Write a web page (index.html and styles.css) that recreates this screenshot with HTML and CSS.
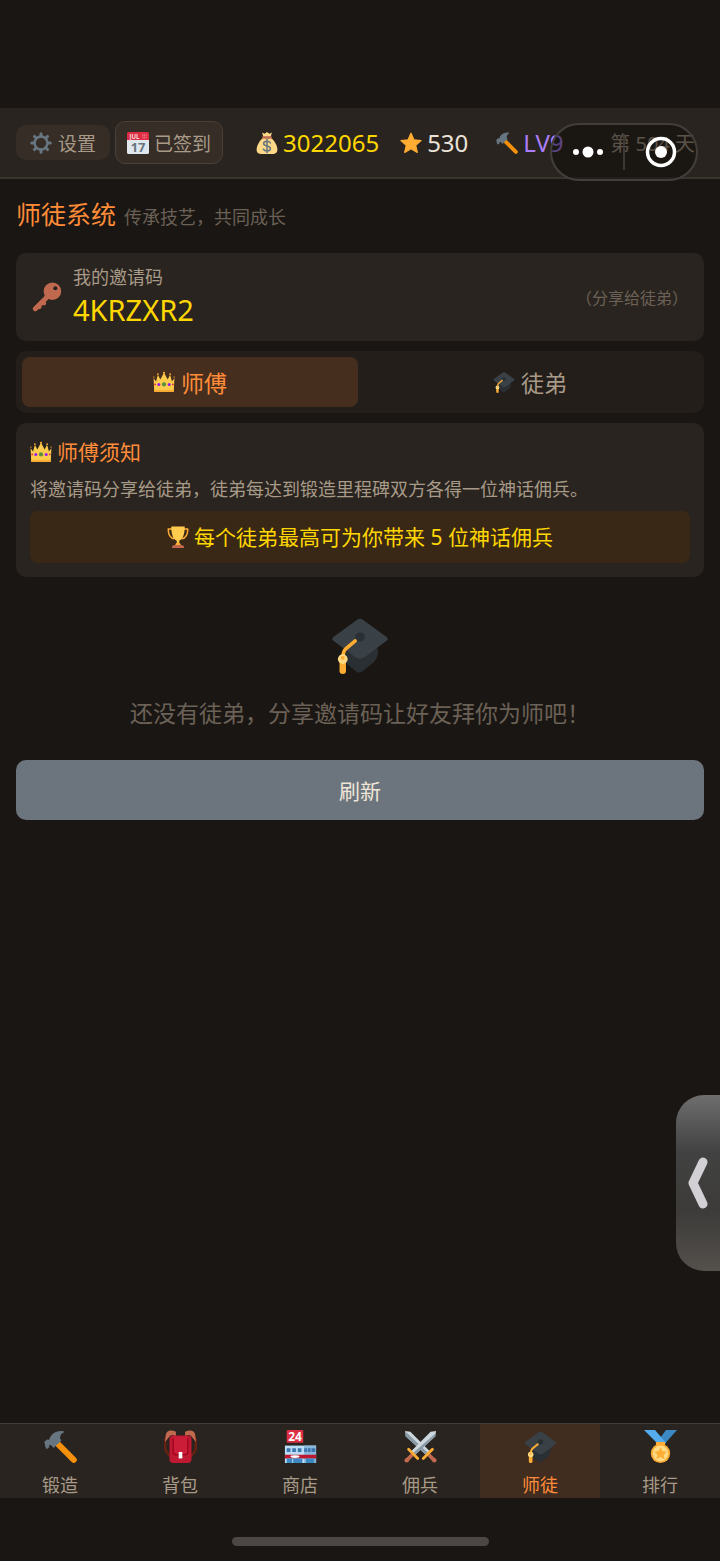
FILE: index.html
```html
<!DOCTYPE html>
<html lang="zh-CN">
<head>
    <meta charset="UTF-8">
    <meta name="viewport" content="width=device-width, initial-scale=1.0">
    <title>师徒系统</title>
    <link rel="stylesheet" href="styles.css">
</head>
<body>
    <svg class="sprite" aria-hidden="true">
        <symbol id="icon-gear" viewBox="0 0 36 36">
            <g stroke="#66757f" stroke-width="5" stroke-linecap="round">
                <path d="M18 2.800v4M18 29.200v4M2.800 18h4M29.200 18h4M7.300 7.300l3 3M25.700 25.700l3 3M28.700 7.300l-3 3M10.300 25.700l-3 3"/>
            </g>
            <circle cx="18" cy="18" r="10.500" fill="none" stroke="#66757f" stroke-width="4"/>
        </symbol>
        <symbol id="icon-calendar" viewBox="0 0 36 36">
            <rect x="0" y="2" width="36" height="34" rx="3" fill="#e1e8ed"/>
            <path d="M0 13V3q0-3 3-3h30q3 0 3 3v10z" fill="#dd2e44"/>
            <text x="4" y="11" font-size="10" font-weight="700" fill="#f5d5d9">JUL</text>
            <path d="M25 5h7M25 9h7" stroke="#f4707f" stroke-width="3" stroke-dasharray="2 1"/>
            <text x="18" y="32" font-size="21" font-weight="700" text-anchor="middle" fill="#66757f">17</text>
        </symbol>
        <symbol id="icon-money" viewBox="0 0 36 36">
            <path d="M12 9h12c6 5 11 13 11 20 0 5-4 7-8 7H9c-5 0-8-2-8-7C1 22 6 14 12 9z" fill="#fdd888"/>
            <path d="M10 1l4 2 4-3 4 3 4-2-2 7H12z" fill="#fdd888"/>
            <rect x="10" y="7" width="16" height="4" rx="2" fill="#bf6952"/>
            <path d="M23.500 18c-1-2-3-3-5.500-3-3 0-5.500 1.500-5.500 4s2.500 3.500 5.500 4 5.500 1.500 5.500 4-2.500 4-5.500 4-5-1-6-3M18 12v22" fill="none" stroke="#67757f" stroke-width="2.500" stroke-linecap="round"/>
        </symbol>
        <symbol id="icon-star" viewBox="0 0 36 36">
            <path d="M18 2l4.800 10.800 11.700 1.200-8.800 7.800 2.600 11.600L18 27.400 7.700 33.400l2.600-11.600L1.500 14l11.700-1.200z" fill="#ffac33" stroke="#ffac33" stroke-width="2" stroke-linejoin="round"/>
        </symbol>
        <symbol id="icon-hammer" viewBox="0 0 36 36">
            <path d="M14 14l18.500 18.500" stroke="#f4900c" stroke-width="6.500" stroke-linecap="round"/>
            <path d="M.7 14.500c-.6-.8-.4-1.600.3-2.200l2-1.600c.8-.6 1.600-.4 2.400.2C7 5 12 1.200 18 1c2.500-.1 3.800.5 4.600 1.200-3.600.8-5.300 4-5.100 7l1.500 2.300-8.500 8-2.500-2.700c-1-.8-2-.6-2.600.1.700 1 .6 1.700-.1 2.300l-1.300 1c-.7.600-1.500.4-2.100-.4z" fill="#66757f"/>
        </symbol>
        <symbol id="icon-key" viewBox="0 0 36 36">
            <circle cx="24.500" cy="11" r="10.500" fill="#c1694f"/>
            <path d="M19 17L4 32" stroke="#c1694f" stroke-width="6" stroke-linecap="round"/>
            <path d="M8 28l1 2M13 24l1.500 1.500" stroke="#c1694f" stroke-width="5" stroke-linecap="round"/>
            <circle cx="28" cy="7.500" r="2.500" fill="#292421"/>
        </symbol>
        <symbol id="icon-crown" viewBox="0 0 36 36">
            <path d="M2 34L1 12l4 5 3-11 4 8 6-11 6 11 4-8 3 11 4-5-1 22z" fill="#ffcc4d"/>
            <g fill="#ffac33">
                <circle cx="1.500" cy="10" r="1.200"/><circle cx="8" cy="5" r="1.500"/><circle cx="18" cy="3" r="1.800"/><circle cx="28" cy="5" r="1.500"/><circle cx="34.500" cy="10" r="1.200"/>
                <path d="M2 31h32v3H2z"/>
            </g>
            <circle cx="18" cy="22" r="3.500" fill="#5c913b"/>
            <circle cx="9.500" cy="22" r="2.500" fill="#981ceb"/>
            <circle cx="26.500" cy="22" r="2.500" fill="#981ceb"/>
            <circle cx="3.500" cy="22" r="1.500" fill="#dd2e44"/>
            <circle cx="32.500" cy="22" r="1.500" fill="#dd2e44"/>
        </symbol>
        <symbol id="icon-cap" viewBox="0 0 36 36">
            <path d="M8 17l16-1 5 4c1 4-1 8-4 10l-5 4c-2 1.500-3 1.500-5 0L8 28z" fill="#292f33"/>
            <path d="M1.500 13L16 2.500q2-1.500 4 0L34.500 13q1.500 1.200 0 2.400L21 25.500q-3 2-6 0L1.500 15.400Q0 14.200 1.500 13z" fill="#394147"/>
            <ellipse cx="18" cy="13" rx="3" ry="2.800" fill="#292f33"/>
            <path d="M15 15.500l-6 5q-1.500 1.500-1.500 5" fill="none" stroke="#ffac33" stroke-width="2.200" stroke-linecap="round"/>
            <path d="M7.300 28v6" stroke="#ffac33" stroke-width="4" stroke-linecap="round"/>
            <circle cx="7.300" cy="26.800" r="3" fill="#ffd983"/>
            <circle cx="7.300" cy="26" r="1.200" fill="#ffac33"/>
        </symbol>
        <symbol id="icon-trophy" viewBox="0 0 36 36">
            <path d="M9 5H2c0 8 3 15 10 16M27 5h7c0 8-3 15-10 16" fill="none" stroke="#ffac33" stroke-width="2.500" stroke-linejoin="round"/>
            <path d="M7 1h22c0 13-3 21-9 23v6h-4v-6C10 22 7 14 7 1z" fill="#ffcc4d"/>
            <path d="M15 28h6l2 4H13z" fill="#ffac33"/>
            <path d="M8 36q0-5 5-5h10q5 0 5 5z" fill="#c1694f"/>
        </symbol>
        <symbol id="icon-backpack" viewBox="0 0 36 36">
            <path d="M9 2C3 4 1 9 1 16s2 10 7 13M27 2c6 2 8 7 8 14s-2 10-7 13" fill="none" stroke="#662113" stroke-width="3"/>
            <path d="M13 2C8-.5 3 0 2 5l-1 8 6-7q4-2 6 2zM23 2c5-2.500 10-2 11 3l1 8-6-7q-4-2-6 2z" fill="#c1694f"/>
            <path d="M10 6h16q4 0 4 4v22q0 4-4 4H10q-4 0-4-4V10q0-4 4-4z" fill="#be1931"/>
            <path d="M10 7h16v18q0 3-3 3H13q-3 0-3-3z" fill="#cb1c38"/>
            <path d="M10 9v15q0 3 3 3h10q3 0 3-3V9" fill="none" stroke="#a0041e" stroke-width="1.500"/>
            <rect x="16" y="24" width="4" height="7" fill="#fff"/>
        </symbol>
        <symbol id="icon-store" viewBox="0 0 36 36">
            <rect x="1" y="17" width="34" height="19" fill="#bbddf5"/>
            <path d="M22 17h13v19H22z" fill="#88b8dd"/>
            <path d="M3 20h4v4H3zM9 20h4v4H9zM15 20h4v4h-4zM22 20h3v4h-3zM26 20h3v4h-3zM30 20h4v4h-4z" fill="#3b75ad"/>
            <path d="M1 27h34v4H1z" fill="#be1931"/>
            <ellipse cx="12" cy="29" rx="5" ry="1.500" fill="#fff"/>
            <path d="M3 31h6v5H3zM10 31h10v5H10zM24 31h9v5h-9z" fill="#3b88c3"/>
            <rect x="3" y="0" width="18" height="14" rx="1" fill="#dd2e44"/>
            <text x="12" y="11.500" font-size="13" font-weight="700" text-anchor="middle" fill="#fff">24</text>
        </symbol>
        <symbol id="icon-swords" viewBox="0 0 36 36">
            <path d="M1 1l6 1 22 22-4 4L2 7z" fill="#ccd6dd"/>
            <path d="M1 1l26 25-2 2L2 7z" fill="#8899a6"/>
            <path d="M27 27l5 5" stroke="#c1694f" stroke-width="4"/>
            <path d="M21 31l10-10" stroke="#ffac33" stroke-width="3" stroke-linecap="round"/>
            <circle cx="33" cy="33" r="2.500" fill="#c1694f"/>
            <path d="M35 1l-6 1L7 24l4 4L34 7z" fill="#ccd6dd"/>
            <path d="M34 7L11 28l-2-2L34 4z" fill="#8899a6"/>
            <path d="M9 27l-5 5" stroke="#c1694f" stroke-width="4"/>
            <path d="M15 31L5 21" stroke="#ffac33" stroke-width="3" stroke-linecap="round"/>
            <circle cx="3" cy="33" r="2.500" fill="#c1694f"/>
        </symbol>
        <symbol id="icon-medal" viewBox="0 0 36 36">
            <path d="M36 0H24l-9 12 6 5z" fill="#3b88c3"/>
            <path d="M0 0h12l12 14-5 5z" fill="#55acee"/>
            <rect x="13" y="13" width="10" height="5" rx="1" fill="#ffac33"/>
            <circle cx="18" cy="25.500" r="10.500" fill="#ffac33"/>
            <circle cx="18" cy="25.500" r="8.500" fill="#ffd983"/>
            <path d="M18 18.500l2 4.700 5 .5-3.800 3.300 1.200 5-4.400-2.700-4.400 2.700 1.200-5-3.800-3.300 5-.5z" fill="#ffac33"/>
        </symbol>
    </svg>

    <div class="page">
        <header class="top-bar">
            <button class="settings-button"><svg class="icon"><use href="#icon-gear"/></svg>设置</button>
            <button class="checkin-button"><svg class="icon"><use href="#icon-calendar"/></svg>已签到</button>
            <div class="resource coins"><svg class="icon"><use href="#icon-money"/></svg>3022065</div>
            <div class="resource stars"><svg class="icon"><use href="#icon-star"/></svg>530</div>
            <div class="resource level"><svg class="icon"><use href="#icon-hammer"/></svg>LV9</div>
            <div class="day">第 504 天</div>
            <div class="capsule">
                <button class="capsule-button" aria-label="更多">
                    <svg width="32" height="12" viewBox="0 0 32 12" fill="#fff"><circle cx="4" cy="6" r="3"/><circle cx="16" cy="6" r="5.500"/><circle cx="28" cy="6" r="3"/></svg>
                </button>
                <span class="capsule-line"></span>
                <button class="capsule-button" aria-label="关闭">
                    <svg width="32" height="32" viewBox="0 0 32 32"><circle cx="16" cy="16" r="13.500" fill="none" stroke="#fff" stroke-width="3.500"/><circle cx="16" cy="16" r="6" fill="#fff"/></svg>
                </button>
            </div>
        </header>

        <main class="content">
            <div class="title-row">
                <h1>师徒系统</h1>
                <span class="subtitle">传承技艺，共同成长</span>
            </div>

            <section class="card invite-card">
                <svg class="key-icon"><use href="#icon-key"/></svg>
                <div class="invite-info">
                    <div class="invite-label">我的邀请码</div>
                    <div class="invite-code">4KRZXR2</div>
                </div>
                <span class="invite-hint">（分享给徒弟）</span>
            </section>

            <div class="tabs" role="tablist">
                <button class="tab active" role="tab" aria-selected="true"><svg class="icon"><use href="#icon-crown"/></svg>师傅</button>
                <button class="tab" role="tab" aria-selected="false"><svg class="icon"><use href="#icon-cap"/></svg>徒弟</button>
            </div>

            <section class="card notice-card">
                <h2><svg class="icon"><use href="#icon-crown"/></svg>师傅须知</h2>
                <p>将邀请码分享给徒弟，徒弟每达到锻造里程碑双方各得一位神话佣兵。</p>
                <div class="highlight"><svg class="icon"><use href="#icon-trophy"/></svg>每个徒弟最高可为你带来 5 位神话佣兵</div>
            </section>

            <div class="empty">
                <svg class="empty-icon"><use href="#icon-cap"/></svg>
                <p>还没有徒弟，分享邀请码让好友拜你为师吧！</p>
            </div>

            <button class="refresh-button">刷新</button>
        </main>

        <button class="drawer-handle" aria-label="展开">
            <svg width="20" height="52" viewBox="0 0 20 52"><path d="M15 5L5 26l10 21" fill="none" stroke="#d2d0d4" stroke-width="9" stroke-linecap="round" stroke-linejoin="round"/></svg>
        </button>

        <nav class="bottom-nav">
            <button class="nav-item"><svg class="nav-icon"><use href="#icon-hammer"/></svg>锻造</button>
            <button class="nav-item"><svg class="nav-icon"><use href="#icon-backpack"/></svg>背包</button>
            <button class="nav-item"><svg class="nav-icon"><use href="#icon-store"/></svg>商店</button>
            <button class="nav-item"><svg class="nav-icon"><use href="#icon-swords"/></svg>佣兵</button>
            <button class="nav-item active"><svg class="nav-icon"><use href="#icon-cap"/></svg>师徒</button>
            <button class="nav-item"><svg class="nav-icon"><use href="#icon-medal"/></svg>排行</button>
        </nav>
        <div class="home-area"><div class="home-bar"></div></div>
    </div>
</body>
</html>
```
FILE: styles.css
```css
* {
    box-sizing: border-box;
}
body {
    margin: 0;
    background-color: #1a1613;
    color: #a89a88;
    font-family: "Noto Sans", "Noto Sans CJK SC", sans-serif;
    font-size: 18px;
}
h1, h2, p {
    margin: 0;
    font-weight: 400;
}
button {
    margin: 0;
    padding: 0;
    border: none;
    background: none;
    color: inherit;
    font-family: inherit;
    cursor: pointer;
}
.sprite {
    display: none;
}
.icon {
    width: 22px;
    height: 22px;
    flex-shrink: 0;
}
.page {
    position: relative;
    display: flex;
    flex-direction: column;
    min-height: 100vh;
    padding-top: 108px;
}

/* top bar */
.top-bar {
    position: relative;
    display: flex;
    align-items: center;
    height: 71px;
    padding: 0 16px;
    background-color: #29241f;
    border-bottom: 2px solid #3b3530;
    white-space: nowrap;
}
.settings-button, .checkin-button {
    display: flex;
    align-items: center;
    justify-content: center;
    background-color: #352d26;
    font-size: 19px;
}
.settings-button {
    height: 35px;
    padding: 0 14px;
    gap: 6px;
    border-radius: 10px;
}
.checkin-button {
    height: 43px;
    margin-left: 5px;
    padding: 0 11px;
    gap: 5px;
    border: 1px solid #4a4037;
    border-radius: 10px;
}
.resource {
    display: flex;
    align-items: center;
    gap: 5px;
    font-size: 24px;
}
.coins {
    margin-left: 33px;
    color: #ffd700;
}
.stars {
    margin-left: 21px;
    color: #ebe3d8;
}
.level {
    margin-left: 28px;
    color: #a97dfa;
}
.day {
    margin-left: auto;
    padding-right: 9px;
    font-size: 20px;
}
.capsule {
    position: absolute;
    top: 15px;
    right: 22px;
    display: flex;
    align-items: center;
    width: 148px;
    height: 58px;
    background-color: rgba(11, 9, 8, 0.5);
    border: 2px solid #433e3b;
    border-radius: 29px;
}
.capsule-button {
    display: flex;
    flex: 1;
    justify-content: center;
}
.capsule-line {
    width: 2px;
    height: 36px;
    background-color: #3d3833;
}

/* content */
.content {
    display: flex;
    flex-direction: column;
    padding: 20px 16px 0;
}
.title-row {
    display: flex;
    align-items: baseline;
    gap: 8px;
    line-height: 30px;
    margin-bottom: 21px;
}
.title-row h1 {
    font-size: 25px;
    color: #ff8c38;
}
.subtitle {
    color: #6b6156;
}
.card {
    background-color: #29241f;
    border-radius: 10px;
}
.invite-card {
    display: flex;
    align-items: center;
    gap: 11px;
    padding: 12px 16px;
}
.key-icon {
    width: 30px;
    height: 30px;
}
.invite-info {
    flex: 1;
}
.invite-label {
    line-height: 24px;
    margin-bottom: 2px;
}
.invite-code {
    font-size: 29px;
    line-height: 38px;
    color: #ffd700;
}
.invite-hint {
    font-size: 16px;
    color: #6b6156;
}
.tabs {
    display: flex;
    gap: 4px;
    margin: 10px 0;
    padding: 6px;
    background-color: #231e1a;
    border-radius: 10px;
}
.tab {
    display: flex;
    flex: 1;
    align-items: center;
    justify-content: center;
    gap: 6px;
    height: 50px;
    border-radius: 8px;
    font-size: 23px;
}
.tab.active {
    background-color: #462e1e;
    color: #ff8c38;
}
.notice-card {
    padding: 14px;
}
.notice-card h2 {
    display: flex;
    align-items: center;
    gap: 5px;
    font-size: 21px;
    line-height: 30px;
    color: #ff8c38;
}
.notice-card p {
    margin: 8px 0;
    line-height: 28px;
}
.highlight {
    display: flex;
    align-items: center;
    justify-content: center;
    gap: 5px;
    height: 52px;
    background-color: #3a2816;
    border-radius: 8px;
    font-size: 21px;
    line-height: 28px;
    color: #ffd700;
}
.empty {
    display: flex;
    flex-direction: column;
    align-items: center;
    gap: 22px;
    padding: 38px 0 31px;
    font-size: 23px;
    line-height: 32px;
    color: #6b6156;
}
.empty-icon {
    width: 58px;
    height: 60px;
}
.refresh-button {
    height: 60px;
    border-radius: 10px;
    background-color: #6c757d;
    color: #f0e6d8;
    font-size: 21px;
}

/* side drawer handle */
.drawer-handle {
    position: absolute;
    right: 0;
    bottom: 290px;
    display: flex;
    align-items: center;
    justify-content: center;
    width: 44px;
    height: 176px;
    border-radius: 28px 0 0 28px;
    background: linear-gradient(#6e6e6f, #424242 32%, #3c3b39 65%, #54504c);
}

/* bottom navigation */
.bottom-nav {
    display: flex;
    margin-top: auto;
    background-color: #29241f;
    border-top: 1px solid #433d38;
}
.nav-item {
    display: flex;
    flex: 1;
    flex-direction: column;
    align-items: center;
    gap: 10px;
    padding: 6px 0 1px;
    font-size: 18px;
    line-height: 24px;
}
.nav-item.active {
    background-color: #402d20;
    color: #ff8c38;
}
.nav-icon {
    width: 33px;
    height: 33px;
}
.home-area {
    display: flex;
    justify-content: center;
    padding: 39px 0 15px;
}
.home-bar {
    width: 257px;
    height: 9px;
    border-radius: 5px;
    background-color: #4c4744;
}
```
